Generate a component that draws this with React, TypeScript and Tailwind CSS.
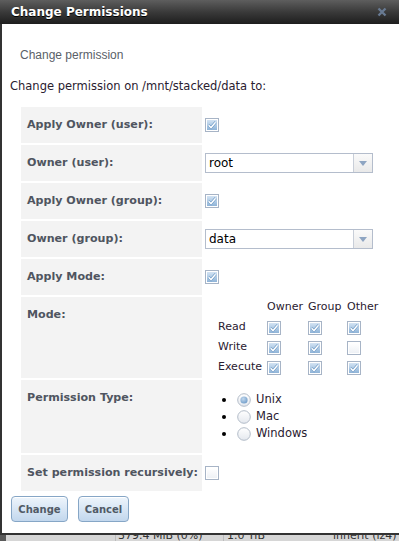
import React from "react";

function Check({ checked }: { checked: boolean }) {
  return (
    <svg width="14" height="14" viewBox="0 0 14 14" className="block">
      <defs>
        <linearGradient id="cbOn" x1="0" y1="0" x2="0" y2="1">
          <stop offset="0" stopColor="#d3e3f3" />
          <stop offset="1" stopColor="#8fb4d8" />
        </linearGradient>
        <linearGradient id="cbOff" x1="0" y1="0" x2="0" y2="1">
          <stop offset="0" stopColor="#ffffff" />
          <stop offset="1" stopColor="#eef1f5" />
        </linearGradient>
      </defs>
      <rect x="0.5" y="0.5" width="13" height="13" fill="#fff" stroke="#a7b4c6" />
      {checked ? (
        <>
          <rect x="2" y="2" width="10" height="10" fill="url(#cbOn)" />
          <path d="M3.6 7.2 L6 9.6 L10.6 4.2" stroke="#5f8fbf" strokeWidth="2.6" fill="none" />
          <path d="M3.6 7.2 L6 9.6 L10.6 4.2" stroke="#fff" strokeWidth="1.5" fill="none" />
        </>
      ) : (
        <rect x="2" y="2" width="10" height="10" fill="url(#cbOff)" />
      )}
    </svg>
  );
}

function Radio({ checked }: { checked: boolean }) {
  return (
    <svg width="14" height="14" viewBox="0 0 14 14" className="block">
      <defs>
        <linearGradient id="rbOff" x1="0" y1="0" x2="0" y2="1">
          <stop offset="0" stopColor="#ffffff" />
          <stop offset="1" stopColor="#e4e8ee" />
        </linearGradient>
        <radialGradient id="rbOn" cx="0.4" cy="0.35" r="0.7">
          <stop offset="0" stopColor="#c2d8ee" />
          <stop offset="1" stopColor="#6f9cc8" />
        </radialGradient>
      </defs>
      <circle cx="7" cy="7" r="6.3" fill="url(#rbOff)" stroke="#b3bcc8" />
      {checked && <circle cx="7" cy="7" r="3.6" fill="url(#rbOn)" />}
    </svg>
  );
}

function Select({ value }: { value: string }) {
  return (
    <div className="flex h-[20px] w-[168px] border border-[#b4bdcc] bg-white">
      <div className="flex-1 flex items-center pl-[3px] text-[12px] text-black">{value}</div>
      <div className="w-[19px] border-l border-[#c8ced8] bg-gradient-to-b from-[#fafafa] to-[#e9e9e9] flex items-center justify-center">
        <svg width="8" height="5" viewBox="0 0 8 5">
          <path d="M0 0 L8 0 L4 5 Z" fill="#8ea5c2" />
        </svg>
      </div>
    </div>
  );
}

function Label({ children }: { children: React.ReactNode }) {
  return (
    <div className="bg-[#f3f3f3] pl-[6px] pt-[11px] text-[11.1px] font-bold text-[#4f5560] leading-[14px] whitespace-nowrap">
      {children}
    </div>
  );
}

function Btn({ children, w }: { children: React.ReactNode; w: string }) {
  return (
    <button className={`${w} h-[26px] rounded-[4px] border border-[#86a6c6] bg-gradient-to-b from-[#eef5fc] to-[#c2d7ed] text-[10px] font-bold text-[#505a66] shadow-[inset_0_1px_0_#fff]`}>
      {children}
    </button>
  );
}

export default function App() {
  const cell = "flex items-center pl-[1px]";
  return (
    <div className="w-[399px] h-[541px] overflow-hidden bg-white flex flex-col font-['DejaVu_Sans',Verdana,sans-serif]">
      <div className="h-[24px] shrink-0 bg-gradient-to-b from-[#5e5e5e] via-[#3a3a3a] to-[#1e1e1e] flex items-center justify-between pl-[11px] pr-[12px]">
        <span className="text-white font-bold text-[12px] leading-none [text-shadow:0_1px_0_#000]">Change Permissions</span>
        <svg width="10" height="10" viewBox="0 0 10 10">
          <path d="M1.5 1.5 L8.5 8.5 M8.5 1.5 L1.5 8.5" stroke="#687a92" strokeWidth="2.4" />
        </svg>
      </div>
      <div className="h-[509px] shrink-0 border-l-2 border-[#333] flex flex-col">
        <div className="pt-[24px] pl-[18px] text-[12px] leading-[15px] text-[#5a5f68] font-['Liberation_Sans',Arial,sans-serif]">
          Change permission
        </div>
        <div className="pt-[16px] pl-[8px] text-[11.5px] leading-[14px] text-[#2a2030]">
          Change permission on /mnt/stacked/data to:
        </div>
        <div className="mt-[14px] ml-[19px] grid grid-cols-[181px_1fr] gap-[2px]">
          <Label>Apply Owner (user):</Label>
          <div className={`${cell} h-[36px]`}><Check checked /></div>

          <Label>Owner (user):</Label>
          <div className={`${cell} h-[36px]`}><Select value="root" /></div>

          <Label>Apply Owner (group):</Label>
          <div className={`${cell} h-[36px]`}><Check checked /></div>

          <Label>Owner (group):</Label>
          <div className={`${cell} h-[36px]`}><Select value="data" /></div>

          <Label>Apply Mode:</Label>
          <div className={`${cell} h-[36px]`}><Check checked /></div>

          <Label>Mode:</Label>
          <div className="h-[81px] flex items-center pl-[14px]">
            <div className="grid grid-cols-[49px_41px_39px_auto] auto-rows-[20px] items-center text-[11px] text-[#2a2030]">
              <div />
              <div>Owner</div>
              <div>Group</div>
              <div>Other</div>
              <div>Read</div>
              <Check checked />
              <Check checked />
              <Check checked />
              <div>Write</div>
              <Check checked />
              <Check checked />
              <Check checked={false} />
              <div>Execute</div>
              <Check checked />
              <Check checked />
              <Check checked />
            </div>
          </div>

          <Label>Permission Type:</Label>
          <div className="h-[73px] flex items-center pl-[18px]">
            <ul className="text-[11.5px] text-[#2a2030]">
              {[
                ["Unix", true],
                ["Mac", false],
                ["Windows", false],
              ].map(([t, c]) => (
                <li key={t as string} className="h-[17px] flex items-center">
                  <span className="w-[4px] h-[4px] rounded-full bg-black" />
                  <span className="ml-[11px]"><Radio checked={c as boolean} /></span>
                  <span className="ml-[5px]">{t as string}</span>
                </li>
              ))}
            </ul>
          </div>

          <Label>Set permission recursively:</Label>
          <div className={`${cell} h-[36px]`}><Check checked={false} /></div>
        </div>
        <div className="mt-[5px] ml-[9px] flex gap-[10px]">
          <Btn w="w-[57px]">Change</Btn>
          <Btn w="w-[51px]">Cancel</Btn>
        </div>
      </div>
      <div className="h-[2px] shrink-0 bg-[#333]" />
      <div className="flex-1 flex bg-[#d6d6d6] overflow-hidden">
        <div className="w-[6px] bg-[#5a5a5a]" />
        <div className="relative flex-1">
          <div className="absolute left-[109px] top-0 bottom-0 w-px bg-[#bcbcbc]" />
          <div className="absolute left-[217px] top-0 bottom-0 w-px bg-[#bcbcbc]" />
          <div className="absolute left-[112px] top-[-7px] text-[11px] text-[#333] whitespace-nowrap">379.4 MiB (0%)</div>
          <div className="absolute left-[221px] top-[-7px] text-[11px] text-[#333] whitespace-nowrap">1.0 TiB</div>
          <div className="absolute left-[327px] top-[-7px] text-[11px] text-[#333] whitespace-nowrap">inherit (lz4)</div>
        </div>
      </div>
    </div>
  );
}
